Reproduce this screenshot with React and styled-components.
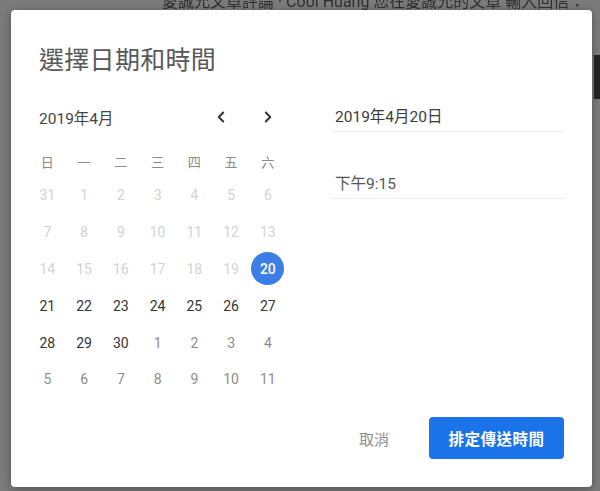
import React from "react";
import styled, { createGlobalStyle } from "styled-components";
import { ChevronLeft, ChevronRight } from "lucide-react";

const GlobalStyle = createGlobalStyle`
  html, body {
    margin: 0;
    padding: 0;
    background: #7b7b7b;
  }
  body {
    font-family: Roboto, "Noto Sans CJK TC", "Noto Sans", sans-serif;
    -webkit-font-smoothing: antialiased;
  }
`;

const Backdrop = styled.div`
  width: 600px;
  height: 491px;
  display: grid;
  grid-template-columns: 11px 581px 8px;
  grid-template-rows: 10px 477px 4px;
  overflow: hidden;
`;

const TopStrip = styled.div`
  grid-column: 1 / -1;
  display: flex;
  align-items: flex-end;
  padding-left: 162px;
  overflow: hidden;
  color: #2e2e2e;
  font-size: 16px;
  line-height: 16px;
  white-space: nowrap;
  filter: blur(0.4px);
`;

const Gutter = styled.div`
  display: flex;
  flex-direction: column;
  padding-top: ${(p) => p.$top || 0}px;
  overflow: hidden;
`;

const DarkBar = styled.div`
  height: 44px;
  background: #222;
  margin-left: 2px;
`;

const Dialog = styled.div`
  background: #fff;
  border-radius: 4px;
  box-shadow: 0 2px 8px rgba(0, 0, 0, 0.35);
  display: flex;
  flex-direction: column;
  padding: 35px 28px 28px 18px;
  box-sizing: border-box;
`;

const Title = styled.h2`
  margin: 0 0 22px 10px;
  font-size: 25px;
  line-height: 32px;
  font-weight: 400;
  color: #585858;
  letter-spacing: 0.3px;
`;

const Body = styled.div`
  flex: 1;
  display: flex;
  justify-content: space-between;
`;

const Calendar = styled.div`
  width: 257px;
  display: flex;
  flex-direction: column;
`;

const CalHeader = styled.div`
  height: 36px;
  display: flex;
  align-items: center;
  margin-bottom: 10px;
`;

const MonthLabel = styled.div`
  flex: 1;
  padding-left: 10px;
  font-size: 15.5px;
  color: #444;
`;

const NavButton = styled.button`
  width: 36px;
  height: 36px;
  border: 0;
  background: none;
  padding: 0;
  display: flex;
  align-items: center;
  justify-content: center;
  color: #333;
  cursor: pointer;
  & + & {
    margin-left: 11px;
  }
`;

const Grid = styled.div`
  display: grid;
  grid-template-columns: repeat(7, 36.75px);
  grid-template-rows: 32px;
  grid-auto-rows: 36.8px;
`;

const WeekDay = styled.div`
  display: flex;
  align-items: center;
  justify-content: center;
  font-size: 13px;
  color: #8a8a8a;
`;

const dayColor = {
  past: "#d2d2d2",
  current: "#333",
  other: "#8d8d8d",
  selected: "#fff",
};

const Day = styled.div`
  display: flex;
  align-items: center;
  justify-content: center;
  font-size: 14px;
  font-weight: ${(p) => (p.$kind === "selected" ? 500 : 400)};
  color: ${(p) => dayColor[p.$kind]};
`;

const SelectedDot = styled.span`
  width: 33px;
  height: 33px;
  border-radius: 50%;
  background: #3b7ee6;
  display: flex;
  align-items: center;
  justify-content: center;
`;

const Fields = styled.div`
  width: 232px;
  display: flex;
  flex-direction: column;
  gap: 34px;
`;

const Field = styled.div`
  height: 32px;
  display: flex;
  align-items: center;
  padding-left: 3px;
  border-bottom: 1px solid #ececec;
  font-size: 15.5px;
  color: ${(p) => (p.$muted ? "#555" : "#3a3a3a")};
`;

const Footer = styled.div`
  display: flex;
  justify-content: flex-end;
  align-items: center;
  gap: 24px;
`;

const TextButton = styled.button`
  height: 42px;
  padding: 0 16px;
  border: 0;
  background: none;
  font-family: "Noto Sans CJK TC", sans-serif;
  font-size: 15px;
  color: #8d8d8d;
  cursor: pointer;
`;

const PrimaryButton = styled.button`
  width: 135px;
  height: 42px;
  border: 0;
  border-radius: 4px;
  background: #1a73e8;
  color: #fff;
  font-family: "Noto Sans CJK TC", sans-serif;
  font-size: 15.5px;
  font-weight: 700;
  letter-spacing: 0.5px;
  cursor: pointer;
`;

const weekDays = ["日", "一", "二", "三", "四", "五", "六"];

const days = [
  ...[31, 1, 2, 3, 4, 5, 6, 7, 8, 9, 10, 11, 12, 13, 14, 15, 16, 17, 18, 19].map((d) => ({ d, kind: "past" })),
  { d: 20, kind: "selected" },
  ...[21, 22, 23, 24, 25, 26, 27, 28, 29, 30].map((d) => ({ d, kind: "current" })),
  ...[1, 2, 3, 4, 5, 6, 7, 8, 9, 10, 11].map((d) => ({ d, kind: "other" })),
];

const App = () => {
  return (
    <>
      <GlobalStyle />
      <Backdrop>
        <TopStrip>愛誠允文章評論 · Cool Huang 您在愛誠允的文章 輸入回信：</TopStrip>
        <Gutter />
        <Dialog>
          <Title>選擇日期和時間</Title>
          <Body>
            <Calendar>
              <CalHeader>
                <MonthLabel>2019年4月</MonthLabel>
                <NavButton aria-label="上個月">
                  <ChevronLeft size={18} strokeWidth={2.6} />
                </NavButton>
                <NavButton aria-label="下個月">
                  <ChevronRight size={18} strokeWidth={2.6} />
                </NavButton>
              </CalHeader>
              <Grid>
                {weekDays.map((w) => (
                  <WeekDay key={w}>{w}</WeekDay>
                ))}
                {days.map(({ d, kind }, i) => (
                  <Day key={i} $kind={kind}>
                    {kind === "selected" ? <SelectedDot>{d}</SelectedDot> : d}
                  </Day>
                ))}
              </Grid>
            </Calendar>
            <Fields>
              <Field>2019年4月20日</Field>
              <Field $muted>下午9:15</Field>
            </Fields>
          </Body>
          <Footer>
            <TextButton>取消</TextButton>
            <PrimaryButton>排定傳送時間</PrimaryButton>
          </Footer>
        </Dialog>
        <Gutter $top={45}>
          <DarkBar />
        </Gutter>
        <Gutter />
      </Backdrop>
    </>
  );
};

export default App;
